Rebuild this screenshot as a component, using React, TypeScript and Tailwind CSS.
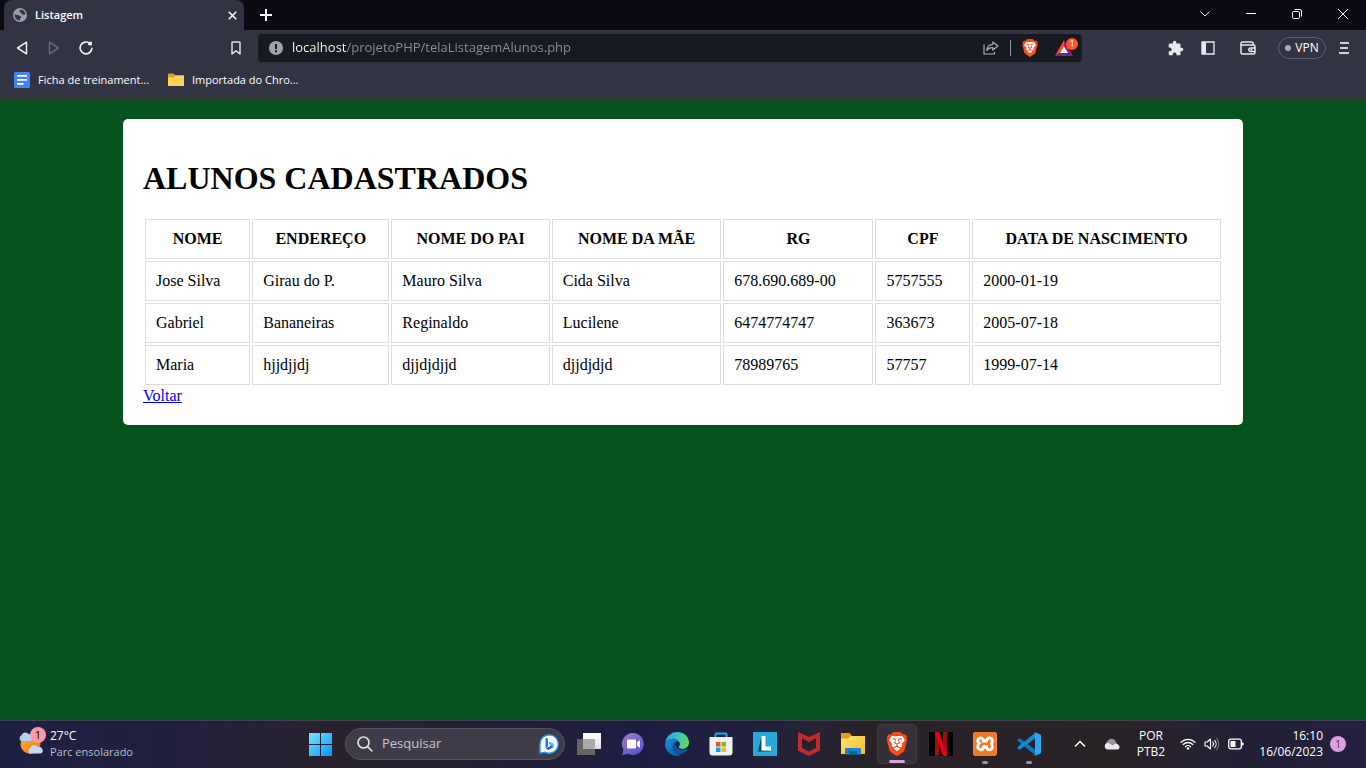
import type { ReactNode } from "react";
import { SiBrave, SiXampp } from "react-icons/si";

type Student = {
  nome: string;
  endereco: string;
  pai: string;
  mae: string;
  rg: string;
  cpf: string;
  nascimento: string;
};

const columns: { key: keyof Student; label: string }[] = [
  { key: "nome", label: "NOME" },
  { key: "endereco", label: "ENDEREÇO" },
  { key: "pai", label: "NOME DO PAI" },
  { key: "mae", label: "NOME DA MÃE" },
  { key: "rg", label: "RG" },
  { key: "cpf", label: "CPF" },
  { key: "nascimento", label: "DATA DE NASCIMENTO" },
];

const students: Student[] = [
  { nome: "Jose Silva", endereco: "Girau do P.", pai: "Mauro Silva", mae: "Cida Silva", rg: "678.690.689-00", cpf: "5757555", nascimento: "2000-01-19" },
  { nome: "Gabriel", endereco: "Bananeiras", pai: "Reginaldo", mae: "Lucilene", rg: "6474774747", cpf: "363673", nascimento: "2005-07-18" },
  { nome: "Maria", endereco: "hjjdjjdj", pai: "djjdjdjjd", mae: "djjdjdjd", rg: "78989765", cpf: "57757", nascimento: "1999-07-14" },
];

/* ---------- Browser icons ---------- */

function GlobeIcon() {
  return (
    <svg width="14" height="14" viewBox="0 0 16 16" aria-hidden="true">
      <circle cx="8" cy="8" r="8" fill="#9b9ea8" />
      <path d="M1.800 7.500 5.500 7.900l3 1.100 1.200 1.500-1.500 1.300-.2 2.600C4.500 14.200 1.600 11.500 1.800 7.500Z" fill="#323443" />
      <path d="M8.800 1.800 7.200 3.200 8 5l1.800.8.600 1.700 2 .3 1.900-.6C14 4.400 11.800 2.200 8.800 1.800Z" fill="#323443" />
    </svg>
  );
}

function CrossIcon({ size, stroke }: { size: number; stroke: number }) {
  return (
    <svg width={size} height={size} viewBox="0 0 12 12" fill="none" stroke="#fff" strokeWidth={stroke} aria-hidden="true">
      <path d="M1 1 11 11M11 1 1 11" />
    </svg>
  );
}

function TriangleIcon({ flip }: { flip?: boolean }) {
  return (
    <svg width="14" height="16" viewBox="0 0 14 16" fill="none" strokeWidth="1.500" strokeLinejoin="round" stroke={flip ? "#6b6d7a" : "#eceef2"} aria-hidden="true">
      <path d={flip ? "M2.500 2.200v11.600l9-5.800Z" : "M11.500 2.200v11.600l-9-5.800Z"} />
    </svg>
  );
}

function ReloadIcon() {
  return (
    <svg width="16" height="16" viewBox="0 0 16 16" fill="none" stroke="#eceef2" strokeWidth="1.700" aria-hidden="true">
      <path d="M11.700 3.300A5.900 5.900 0 1 0 13.900 8.300" strokeLinecap="round" />
      <path d="M9.600 4.900h3.900V1" fill="#eceef2" stroke="none" />
      <circle cx="12.200" cy="3.700" r="1.900" fill="#eceef2" stroke="none" />
    </svg>
  );
}

function ExtensionIcon() {
  return (
    <svg width="16" height="16" viewBox="1 0 23 23" fill="#e8e9ee" aria-hidden="true">
      <path d="M20.500 11H19V7c0-1.100-.9-2-2-2h-4V3.500a2.500 2.500 0 0 0-5 0V5H4c-1.100 0-2 .9-2 2v3.800h1.500a2.700 2.700 0 0 1 0 5.400H2V20c0 1.100.9 2 2 2h3.800v-1.500a2.700 2.700 0 0 1 5.400 0V22H17c1.100 0 2-.9 2-2v-4h1.500a2.500 2.500 0 0 0 0-5Z" />
    </svg>
  );
}

function WalletIcon() {
  return (
    <svg width="16" height="14" viewBox="0 0 16 14" fill="none" stroke="#e8e9ee" strokeWidth="1.500" aria-hidden="true">
      <path d="M13.200 4V2.600c0-.9-.6-1.600-1.500-1.600H2.600C1.700 1 1 1.600 1 2.500v8.700c0 1 .7 1.800 1.700 1.800h10.600c1 0 1.700-.6 1.700-1.600V5.600c0-.9-.6-1.500-1.500-1.500H1.300" />
      <path d="M15 7h-4.500a1.700 1.700 0 0 0 0 3.400H15M10.500 8.700h1.700" />
    </svg>
  );
}

function ShareIcon() {
  return (
    <svg width="16" height="14" viewBox="0 0 16 14" fill="none" stroke="#a9acb5" strokeWidth="1.200" strokeLinejoin="round" aria-hidden="true">
      <path d="M1 3.500V13h10.500v-2" />
      <path d="M9.800 1 15 5 9.800 9V6.700C7.300 6.500 5.200 7.500 3.800 9.500 4 6 6.200 3.600 9.800 3.300Z" />
    </svg>
  );
}

function BraveLogo({ large }: { large?: boolean }) {
  return (
    <span className={large ? "relative flex size-6 items-center justify-center" : "relative flex size-[18px] items-center justify-center"}>
      <svg viewBox="0 0 24 24" className="absolute inset-0" aria-hidden="true">
        <path d="M6 4h12l2 4-2.500 10L12 22l-5.500-4L4 8Z" fill="#fff" />
      </svg>
      <SiBrave className="relative size-full text-[#fb4a1c]" aria-hidden="true" />
    </span>
  );
}

function BatIcon() {
  return (
    <svg width="18" height="16" viewBox="0 0 18 16" aria-hidden="true">
      <path d="M9 0 0 16l9-6Z" fill="#ff4724" />
      <path d="M9 0l9 16-9-6Z" fill="#9e1f63" />
      <path d="M0 16h18l-9-6Z" fill="#662d91" />
      <path d="M9 6.500 5 13h8Z" fill="#fff" />
    </svg>
  );
}

/* ---------- Taskbar icons ---------- */

function WeatherIcon() {
  return (
    <svg width="26" height="26" viewBox="0 0 26 26" aria-hidden="true">
      <defs>
        <linearGradient id="sun" x1="0" y1="0" x2="1" y2="1">
          <stop offset="0" stopColor="#fbb92c" />
          <stop offset="1" stopColor="#e8711c" />
        </linearGradient>
      </defs>
      <circle cx="12.500" cy="13" r="10" fill="url(#sun)" />
      <path d="M3 10a3.200 3.200 0 0 1 .3-5.500A4.200 4.200 0 0 1 11 3.500 3.500 3.500 0 0 1 13 10Z" fill="#b9cdf0" />
      <path d="M12 22.500a3 3 0 0 1 .2-5.400 4.300 4.300 0 0 1 7.900-.8 3.200 3.200 0 0 1 2.500 6.200Z" fill="#c6d8f6" />
    </svg>
  );
}

function WindowsIcon() {
  return (
    <svg width="24" height="24" viewBox="0 0 24 24" aria-hidden="true">
      <defs>
        <linearGradient id="win" x1="0" y1="0" x2="1" y2="1" gradientUnits="objectBoundingBox">
          <stop offset="0" stopColor="#72e6fd" />
          <stop offset="1" stopColor="#0a93fb" />
        </linearGradient>
      </defs>
      <path d="M1 1h11v11H1ZM13 1h11v11H13ZM1 13h11v11H1ZM13 13h11v11H13Z" fill="url(#win)" />
    </svg>
  );
}

function BingIcon() {
  return (
    <svg width="20" height="20" viewBox="0 0 20 20" aria-hidden="true">
      <path d="M10 .8a9.200 9.200 0 1 1-4.200 17.400L1 19.200V10A9.200 9.200 0 0 1 10 .8Z" fill="#fff" stroke="#1f9df0" strokeWidth="1.300" />
      <path d="M6.600 3.800 9 4.800v7.800l-2.400 2Z" fill="#1479e0" />
      <path d="M6.600 14.600 9.400 16l4.900-2.800V9.800L9.600 7.800l1.300 3 1.300.7-3.400 1.800Z" fill="#1f6fdc" />
      <path d="M9.600 7.800l4.700 2v2.600l-2.100-1-1.300-.6Z" fill="#2fc1ee" />
    </svg>
  );
}

function TaskViewIcon() {
  return (
    <svg width="24" height="24" viewBox="0 0 24 24" aria-hidden="true">
      <defs>
        <linearGradient id="tv" x1="0" y1="0" x2="0" y2="1">
          <stop offset="0" stopColor="#fff" />
          <stop offset="1" stopColor="#dedede" />
        </linearGradient>
      </defs>
      <path d="M6 1h18v16H6Z" fill="url(#tv)" />
      <path d="M0 7h18v16H0Z" fill="#646464" />
      <path d="M6 7h12v10H6Z" fill="#aaa" />
    </svg>
  );
}

function ChatIcon() {
  return (
    <svg width="24" height="24" viewBox="0 0 24 24" aria-hidden="true">
      <defs>
        <linearGradient id="chat" x1="0" y1="0" x2="0.700" y2="1">
          <stop offset="0" stopColor="#a877c9" />
          <stop offset="1" stopColor="#5158cc" />
        </linearGradient>
      </defs>
      <path d="M12 1a11 11 0 1 1-5.200 20.800L1 23.300l1.500-5.700A11 11 0 0 1 12 1Z" fill="url(#chat)" />
      <rect x="6" y="7.500" width="9" height="9" rx="1" fill="#fff" />
      <path d="M16 10.300 19 8v8l-3-2.300Z" fill="#fff" />
    </svg>
  );
}

function EdgeIcon() {
  return (
    <svg width="24" height="24" viewBox="0 0 24 24" aria-hidden="true">
      <defs>
        <linearGradient id="edgeTop" x1="0" y1="0.300" x2="1" y2="0.500">
          <stop offset="0" stopColor="#2aa5e5" />
          <stop offset="0.500" stopColor="#35c3c9" />
          <stop offset="1" stopColor="#67d94b" />
        </linearGradient>
        <linearGradient id="edgeLow" x1="0" y1="0" x2="1" y2="1">
          <stop offset="0" stopColor="#1690db" />
          <stop offset="1" stopColor="#0c59a4" />
        </linearGradient>
      </defs>
      <path d="M.2 11A12 12 0 0 1 12 0c7 0 12 4.800 12 10.500 0 4-3 6.300-6.300 6.300-2.200 0-4-.8-4-1.800 0-.7 1.200-1.200 1.200-3 0-2.600-3-5.300-6.900-5.300C3.700 6.700 1 8.400.2 11Z" fill="url(#edgeTop)" />
      <path d="M.1 11.500C1 8.300 4 6.700 7.500 6.700c3.400 0 5.900 1.600 6.900 3.400-1-.6-2-.8-3-.5C8.700 10.500 7.400 13 8 16c.7 4 4.300 6.800 8.400 6.600-1.400.9-3 1.400-5 1.400C4.600 23.500-.3 18 .1 11.500Z" fill="url(#edgeLow)" />
      <path d="M11 9.700c-3 1-4 4-3.200 7.200 1.200 4.500 6.700 7 11 4.200 1.700-1.100 3-2.300 3.800-3.900.1-.4-.2-.6-.6-.4-3.300 1.700-7.500 1.300-9.800-1.300-1.600-1.700-2.300-4-1.200-5.800Z" fill="#12539b" />
    </svg>
  );
}

function StoreIcon() {
  return (
    <svg width="24" height="24" viewBox="0 0 24 24" aria-hidden="true">
      <path d="M6.500 6V2.500c0-.6.400-1 1-1h9c.6 0 1 .4 1 1V6" fill="none" stroke="#2aa6e8" strokeWidth="2" />
      <path d="M.5 5h23v15.500A3 3 0 0 1 20.500 23.500h-17a3 3 0 0 1-3-3Z" fill="#f1f1f1" />
      <path d="M7 10h4.500v4.500H7Z" fill="#f1511b" />
      <path d="M12.500 10H17v4.500h-4.500Z" fill="#7fbb13" />
      <path d="M7 15.500h4.500V20H7Z" fill="#00a3ee" />
      <path d="M12.500 15.500H17V20h-4.500Z" fill="#fcb714" />
    </svg>
  );
}

function LenovoIcon() {
  return (
    <svg width="24" height="24" viewBox="0 0 24 24" aria-hidden="true">
      <path d="M0 0h24v24H0Z" fill="#26a9d6" />
      <path d="M8.500 4 5 19.500h4Z" fill="#123a66" />
      <path d="M5 19.500h13L9 17Z" fill="#174f80" />
      <path d="M8.500 4h4v10.500H18v4H8.500Z" fill="#fff" />
    </svg>
  );
}

function ShieldIcon() {
  return (
    <svg width="24" height="24" viewBox="0 0 24 24" aria-hidden="true">
      <path d="M1 0 12 5 23 0v18.500L12 24 1 18.500Z" fill="#c22b2e" />
      <path d="M5 6.300 12 10l7-3.700v9.800L12 19.500l-7-3.400Z" fill="#25222e" />
    </svg>
  );
}

function ExplorerIcon() {
  return (
    <svg width="24" height="24" viewBox="0 0 24 24" aria-hidden="true">
      <defs>
        <linearGradient id="folder" x1="0" y1="0" x2="1" y2="1">
          <stop offset="0" stopColor="#ffe27a" />
          <stop offset="1" stopColor="#fbbc1d" />
        </linearGradient>
      </defs>
      <path d="M0 1h8.500L11 4l-2 4H0Z" fill="#e2a20c" />
      <path d="M0 6.500h7L10 4h14v18H0Z" fill="url(#folder)" />
      <path d="M4 22.500v-4.700c0-1.200.8-1.800 1.800-1.800h12.400c1 0 1.800.6 1.800 1.800v4.700Z" fill="#1385d8" />
      <path d="M8 19h8v3.500H8Z" fill="#0d5fa5" />
    </svg>
  );
}

function NetflixIcon() {
  return (
    <svg width="24" height="24" viewBox="0 0 24 24" aria-hidden="true">
      <path d="M0 0h24v24H0Z" fill="#000" />
      <path d="M6 0h4v23.500L6 24ZM14 0h4v24l-4-.5Z" fill="#a80a13" />
      <path d="M6 0h4.300L18 24l-4.300-.5Z" fill="#e50914" />
    </svg>
  );
}

function XamppIcon() {
  return (
    <span className="flex size-6 items-center justify-center rounded-[4px] bg-white">
      <SiXampp className="size-6 text-[#ee7a2b]" aria-hidden="true" />
    </span>
  );
}

function CodeIcon() {
  return (
    <svg width="24" height="24" viewBox="0 0 24 24" aria-hidden="true">
      <path d="M.6 7.700 2 6.400c.4-.3.800-.3 1.200 0L18 17.600V23L.6 9c-.4-.4-.4-.9 0-1.300Z" fill="#0a74bd" />
      <path d="M.6 16.300 2 17.600c.4.300.8.300 1.200 0L18 6.400V1L.6 15c-.4.400-.4.900 0 1.300Z" fill="#1089d3" />
      <path d="M17.500 0 24 2.800v18.400L17.500 24c-.6 0-.9-.2-1.200-.6.700.7 1.700.3 1.700-.7V1.300c0-1-1-1.400-1.700-.7.3-.4.600-.6 1.200-.6Z" fill="#2ba5f1" />
    </svg>
  );
}

type TaskApp = { name: string; icon: ReactNode; state?: "active" | "running" };

const taskApps: TaskApp[] = [
  { name: "Visão de tarefas", icon: <TaskViewIcon /> },
  { name: "Chat", icon: <ChatIcon /> },
  { name: "Edge", icon: <EdgeIcon /> },
  { name: "Store", icon: <StoreIcon /> },
  { name: "Lenovo", icon: <LenovoIcon /> },
  { name: "McAfee", icon: <ShieldIcon /> },
  { name: "Explorador de Arquivos", icon: <ExplorerIcon /> },
  { name: "Brave", icon: <BraveLogo large />, state: "active" },
  { name: "Netflix", icon: <NetflixIcon /> },
  { name: "XAMPP", icon: <XamppIcon />, state: "running" },
  { name: "Visual Studio Code", icon: <CodeIcon />, state: "running" },
];

/* ---------- Browser chrome ---------- */

function IconButton({ label, children }: { label: string; children: ReactNode }) {
  return (
    <button type="button" aria-label={label} className="flex h-7 w-8 shrink-0 items-center justify-center">
      {children}
    </button>
  );
}

function WindowButton({ label, children }: { label: string; children: ReactNode }) {
  return (
    <button type="button" aria-label={label} className="flex h-7 w-[46px] items-center justify-center">
      {children}
    </button>
  );
}

function TabStrip() {
  return (
    <div className="flex h-[30px] items-start bg-[#0b0b14] pl-1">
      <div className="flex h-[30px] w-60 items-center gap-2 rounded-t-lg bg-[#323443] pr-1 pl-[9px]">
        <GlobeIcon />
        <span className="flex-1 text-[11px] font-semibold">Listagem</span>
        <button type="button" aria-label="Fechar guia" className="flex size-4 items-center justify-center">
          <CrossIcon size={9} stroke={2} />
        </button>
      </div>
      <button type="button" aria-label="Nova guia" className="ml-2 flex h-[30px] w-7 items-center justify-center">
        <svg width="12" height="12" viewBox="0 0 12 12" stroke="#fff" strokeWidth="2" aria-hidden="true">
          <path d="M6 0v12M0 6h12" />
        </svg>
      </button>
      <div className="ml-auto flex">
        <WindowButton label="Pesquisar guias">
          <svg width="10" height="6" viewBox="0 0 10 6" fill="none" stroke="#e4e4e8" aria-hidden="true">
            <path d="M.5.5 5 5 9.500.5" />
          </svg>
        </WindowButton>
        <WindowButton label="Minimizar">
          <svg width="10" height="2" viewBox="0 0 10 2" aria-hidden="true">
            <path d="M0 0h10v1H0Z" fill="#fff" />
          </svg>
        </WindowButton>
        <WindowButton label="Restaurar">
          <svg width="10" height="10" viewBox="0 0 10 10" fill="none" stroke="#fff" aria-hidden="true">
            <rect x=".5" y="2.500" width="7" height="7" rx="1.200" />
            <path d="M2.500.5H8A1.500 1.500 0 0 1 9.500 2v5.500" />
          </svg>
        </WindowButton>
        <WindowButton label="Fechar">
          <CrossIcon size={12} stroke={1} />
        </WindowButton>
      </div>
    </div>
  );
}

function Toolbar() {
  return (
    <div className="flex h-9 items-center px-[6px]">
      <IconButton label="Voltar página"><TriangleIcon /></IconButton>
      <IconButton label="Avançar"><TriangleIcon flip /></IconButton>
      <IconButton label="Recarregar"><ReloadIcon /></IconButton>
      <div className="mr-[6px] ml-[118px]">
        <IconButton label="Adicionar favorito">
          <svg width="10" height="14" viewBox="0 0 10 14" fill="none" stroke="#dfe0e6" strokeWidth="1.500" strokeLinejoin="round" aria-hidden="true">
            <path d="M1 1.800C1 1.300 1.300 1 1.800 1h6.400c.5 0 .8.300.8.800V13L5 9.800 1 13Z" />
          </svg>
        </IconButton>
      </div>
      <div className="flex h-7 min-w-0 flex-1 items-center rounded bg-[#181a21] pl-[11px]">
        <svg width="14" height="14" viewBox="0 0 14 14" className="shrink-0" aria-hidden="true">
          <circle cx="7" cy="7" r="7" fill="#a0a3ad" />
          <path d="M6 3h2v5H6ZM6 9.300h2v2H6Z" fill="#181a21" />
        </svg>
        <input
          type="text"
          aria-label="Endereço"
          defaultValue="localhost/projetoPHP/telaListagemAlunos.php"
          className="ml-[9px] min-w-0 flex-1 bg-[linear-gradient(90deg,#fff_55px,#8c8f98_55px)] bg-clip-text text-[13px] text-transparent outline-none"
        />
        <button type="button" aria-label="Compartilhar" className="flex w-7 justify-center">
          <ShareIcon />
        </button>
        <span className="mx-[5px] h-4 w-px bg-[#8f929b]" />
        <button type="button" aria-label="Brave Shields" className="flex w-7 justify-center">
          <BraveLogo />
        </button>
        <button type="button" aria-label="Recompensas" className="relative ml-2 flex h-6 w-[30px] items-center pl-[3px]">
          <BatIcon />
          <span className="absolute top-[2px] right-1 flex size-3 items-center justify-center rounded-full bg-[#fb542b] text-[9px] leading-3 text-white">1</span>
        </button>
      </div>
      <div className="ml-[78px] flex items-center">
        <IconButton label="Extensões"><ExtensionIcon /></IconButton>
        <IconButton label="Barra lateral">
          <svg width="14" height="14" viewBox="0 0 14 14" aria-hidden="true">
            <path d="M1 1h12v12H1Z" fill="none" stroke="#e8e9ee" strokeWidth="1.300" />
            <path d="M1 1h4v12H1Z" fill="#e8e9ee" />
          </svg>
        </IconButton>
        <div className="mr-[14px] ml-2">
          <IconButton label="Carteira"><WalletIcon /></IconButton>
        </div>
        <button type="button" className="flex h-[22px] w-12 items-center justify-center gap-1 rounded-full border border-[#5d6072] text-xs">
          <span className="size-[6px] rounded-full bg-[#a5a8bb]" />
          VPN
        </button>
        <div className="ml-[2px]">
          <IconButton label="Menu">
            <svg width="10" height="12" viewBox="0 0 10 12" fill="#cfd0d8" aria-hidden="true">
              <path d="M1 0h9v2H1ZM1 5h8v2H1ZM0 10h10v2H0Z" />
            </svg>
          </IconButton>
        </div>
      </div>
    </div>
  );
}

function BookmarksBar() {
  return (
    <nav className="flex h-[33px] items-start px-[14px] text-[11px]">
      <a href="#ficha" className="flex h-7 min-w-[138px] items-center gap-2">
        <svg width="16" height="16" viewBox="0 0 16 16" aria-hidden="true">
          <rect width="16" height="16" rx="1.500" fill="#4285f4" />
          <path d="M3 3h10v1.700H3ZM3 7h10v1.700H3ZM3 11h6.500v1.700H3Z" fill="#fff" />
        </svg>
        Ficha de treinament...
      </a>
      <a href="#importada" className="ml-4 flex h-7 min-w-[138px] items-center gap-2">
        <svg width="16" height="14" viewBox="0 0 16 14" aria-hidden="true">
          <path d="M0 1.500C0 .9.400.500 1 .500h4.500L7 2h8c.6 0 1 .4 1 1v3H0Z" fill="#e0a21c" />
          <path d="M0 4.500h5.500L7 3h8.200c.5 0 .8.300.8.800v8.400c0 .5-.3.800-.8.800H.8c-.5 0-.8-.3-.8-.8Z" fill="#ffd25c" />
        </svg>
        Importada do Chro...
      </a>
    </nav>
  );
}

/* ---------- Page ---------- */

function StudentsPage() {
  return (
    <main className="flex-1 bg-[#05521c] px-5 py-5 font-['Liberation_Serif',serif] text-base leading-[18px] text-black">
      <section className="mx-auto max-w-[1120px] rounded-[5px] bg-white p-5">
        <h1 className="my-[21px] text-[32px] leading-9 font-bold">ALUNOS CADASTRADOS</h1>
        <table className="w-full border-separate border-spacing-[2px]">
          <thead>
            <tr>
              {columns.map((column) => (
                <th key={column.key} scope="col" className="border border-[#ddd] p-[10px] text-center font-bold">
                  {column.label}
                </th>
              ))}
            </tr>
          </thead>
          <tbody>
            {students.map((student) => (
              <tr key={student.nome}>
                {columns.map((column) => (
                  <td key={column.key} className="border border-[#ddd] p-[10px]">
                    {student[column.key]}
                  </td>
                ))}
              </tr>
            ))}
          </tbody>
        </table>
        <a href="#voltar" className="block w-fit text-[#0000ee] underline">Voltar</a>
      </section>
    </main>
  );
}

/* ---------- Taskbar ---------- */

function Taskbar() {
  return (
    <footer className="flex h-12 items-center bg-[linear-gradient(90deg,#1e2043_0%,#22203a_15%,#28222c_25%,#242034_36%,#1d1d42_47%,#20203c_55%,#292329_64%,#282227_82%,#222038_92%,#22203c_100%)] text-xs shadow-[inset_0_1px_0_#474052]">
      <div className="flex grow basis-[300px] items-center pl-[18px]">
        <button type="button" className="flex items-center gap-[6px] text-left">
          <span className="relative">
            <WeatherIcon />
            <span className="absolute -top-1 -right-[2px] flex size-4 items-center justify-center rounded-full bg-[#ff99a4] text-[11px] leading-4 text-black">1</span>
          </span>
          <span className="flex flex-col leading-4">
            <span>27°C</span>
            <span className="text-[11px] text-[#bdbdc8]">Parc ensolarado</span>
          </span>
        </button>
      </div>

      <div className="flex items-center">
        <button type="button" aria-label="Iniciar" className="flex size-10 items-center justify-center">
          <WindowsIcon />
        </button>
        <div className="mr-[2px] ml-[5px] flex h-8 w-[220px] items-center rounded-full border border-[#55515f] bg-[#3f3c49] pr-[5px] pl-[11px]">
          <svg width="16" height="16" viewBox="0 0 16 16" fill="none" stroke="#e3e3e6" strokeWidth="1.600" strokeLinecap="round" aria-hidden="true">
            <circle cx="6.500" cy="6.500" r="5.500" />
            <path d="m10.600 10.600 4.400 4.400" />
          </svg>
          <input type="search" aria-label="Pesquisar" placeholder="Pesquisar" className="ml-[9px] min-w-0 flex-1 text-[13px] outline-none placeholder:text-[#c9c8cf]" />
          <BingIcon />
        </div>
        {taskApps.map((app) => (
          <div key={app.name} className="flex w-11 justify-center">
            <button
              type="button"
              aria-label={app.name}
              className={
                app.state === "active"
                  ? "relative flex size-10 items-center justify-center rounded border border-[#3f3a42] bg-[#353038]"
                  : "relative flex size-10 items-center justify-center"
              }
            >
              {app.icon}
              {app.state === "active" && <span className="absolute bottom-0 h-[3px] w-4 rounded-full bg-[#de9be0]" />}
              {app.state === "running" && <span className="absolute bottom-0 h-[3px] w-[6px] rounded-full bg-[#98949a]" />}
            </button>
          </div>
        ))}
      </div>

      <div className="flex grow basis-[315px] items-center justify-end pr-5">
        <button type="button" aria-label="Ícones ocultos" className="flex h-10 w-8 items-center justify-center">
          <svg width="12" height="8" viewBox="0 0 12 8" fill="none" stroke="#fff" strokeWidth="1.500" aria-hidden="true">
            <path d="M1 6.500 6 1.500l5 5" />
          </svg>
        </button>
        <button type="button" aria-label="OneDrive" className="flex h-10 w-8 items-center justify-center">
          <svg width="16" height="12" viewBox="0 0 16 12" aria-hidden="true">
            <path d="M3 8a3.500 3.500 0 0 1 .7-5A4.500 4.500 0 0 1 11.500 3L14 8Z" fill="#94949a" />
            <path d="M3.500 11.500a3.300 3.300 0 0 1 0-6.500c1 0 1.700.3 2.500.9l3 1.600C10 5.800 12 5.400 13.500 6.200c2.500 1 3.200 5.300-.5 5.300Z" fill="#e8e8ea" />
          </svg>
        </button>
        <button type="button" className="flex w-[46px] flex-col text-center leading-4">
          <span>POR</span>
          <span>PTB2</span>
        </button>
        <button type="button" aria-label="Rede, som e bateria" className="mx-[6px] flex items-center gap-2">
          <svg width="16" height="12" viewBox="0 0 16 12" fill="none" stroke="#fff" strokeWidth="1.300" strokeLinecap="round" aria-hidden="true">
            <path d="M1 4.300a9.900 9.900 0 0 1 14 0M3.200 6.500a6.800 6.800 0 0 1 9.600 0M5.400 8.700a3.700 3.700 0 0 1 5.200 0" />
            <circle cx="8" cy="10.500" r="1.200" fill="#fff" stroke="none" />
          </svg>
          <svg width="16" height="14" viewBox="0 0 16 14" fill="none" stroke="#fff" strokeWidth="1.100" strokeLinecap="round" strokeLinejoin="round" aria-hidden="true">
            <path d="M1 5v4h2.200L6.500 12V2L3.200 5Z" />
            <path d="M8.700 5a3 3 0 0 1 0 4M10.700 3.300a5.500 5.500 0 0 1 0 7.400" />
            <path d="M12.700 1.700a8 8 0 0 1 0 10.600" stroke="#77737f" />
          </svg>
          <svg width="17" height="12" viewBox="0 0 17 12" aria-hidden="true">
            <rect x=".7" y="1.200" width="12.600" height="9.600" rx="2" fill="none" stroke="#fff" strokeWidth="1.300" />
            <path d="M2.500 3h5v6h-5Z" fill="#fff" />
            <path d="M14 4.300c2.300 0 2.300 3.400 0 3.400Z" fill="#fff" />
          </svg>
        </button>
        <button type="button" className="flex min-w-[72px] flex-col text-right leading-4">
          <time>16:10</time>
          <time>16/06/2023</time>
        </button>
        <span className="ml-[7px] flex size-4 items-center justify-center rounded-full bg-[#dd9fe0] text-[10px] leading-4 text-[#4b2f50]">1</span>
      </div>
    </footer>
  );
}

export default function App() {
  return (
    <div className="flex min-h-screen flex-col font-['Open_Sans','Noto_Sans',sans-serif] text-white">
      <header className="bg-[#323443]">
        <TabStrip />
        <Toolbar />
        <BookmarksBar />
      </header>
      <StudentsPage />
      <Taskbar />
    </div>
  );
}
